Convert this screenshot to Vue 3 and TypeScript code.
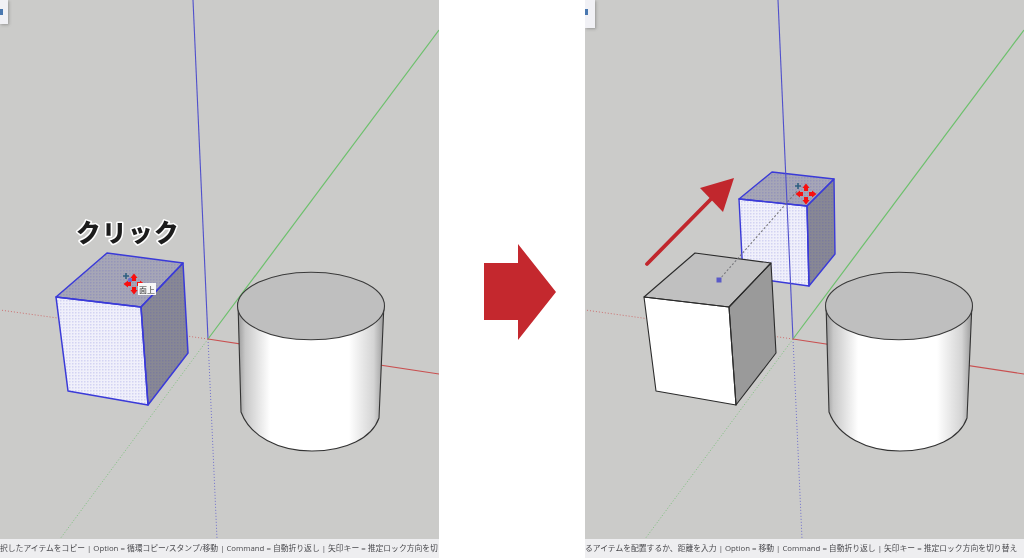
<script setup lang="ts">
type Pt = [number, number]

interface Scene {
  key: string
  dx: number
  text: string
  tabWidth: number
  tabHeight: number
  moved: boolean
}

const scenes: Scene[] = [
  {
    key: 'before',
    dx: 0,
    text: '択したアイテムをコピー | Option = 循環コピー/スタンプ/移動 | Command = 自動折り返し | 矢印キー = 推定ロック方向を切',
    tabWidth: 8,
    tabHeight: 24,
    moved: false,
  },
  {
    key: 'after',
    dx: 3,
    text: 'るアイテムを配置するか、距離を入力 | Option = 移動 | Command = 自動折り返し | 矢印キー = 推定ロック方向を切り替え',
    tabWidth: 10,
    tabHeight: 28,
    moved: true,
  },
]

const pts = (list: Pt[], dx = 0) => list.map(([x, y]) => `${x + dx},${y}`).join(' ')

const cubeTop: Pt[] = [[56, 297], [107, 253], [183, 263], [141, 307]]
const cubeFront: Pt[] = [[56, 297], [141, 307], [148, 405], [68, 391]]
const cubeSide: Pt[] = [[141, 307], [183, 263], [188, 353], [148, 405]]

const smallTop: Pt[] = [[154, 199], [187, 172], [249, 179], [222, 206]]
const smallFront: Pt[] = [[154, 199], [222, 206], [224, 286], [158, 277]]
const smallSide: Pt[] = [[222, 206], [249, 179], [250, 254], [224, 286]]

const cylinderPath = (dx: number) =>
  `M${238 + dx} 303 L${241 + dx} 412 C${250 + dx} 436 ${278 + dx} 451 ${312 + dx} 451 C${346 + dx} 451 ${372 + dx} 438 ${379 + dx} 418 L${384 + dx} 303 Z`
</script>

<template>
  <div class="page">
    <template v-for="(scene, i) in scenes" :key="scene.key">
      <section class="panel">
        <div class="viewport">
          <svg class="canvas" viewBox="0 0 439 539" width="439" height="539">
            <defs>
              <pattern :id="`dots-${scene.key}`" width="3" height="3" patternUnits="userSpaceOnUse">
                <rect width="1.5" height="1.5" fill="#4040c8" fill-opacity="0.16" />
              </pattern>
              <linearGradient :id="`shade-${scene.key}`" x1="0" x2="1" y1="0" y2="0">
                <stop offset="0" stop-color="#9a9a9a" />
                <stop offset="0.05" stop-color="#c8c8c8" />
                <stop offset="0.22" stop-color="#ffffff" />
                <stop offset="0.76" stop-color="#ffffff" />
                <stop offset="0.93" stop-color="#d4d4d4" />
                <stop offset="1" stop-color="#9a9a9a" />
              </linearGradient>
            </defs>

            <g v-if="scene.moved">
              <polygon :points="pts(smallFront)" fill="#f0f0fb" />
              <polygon :points="pts(smallTop)" fill="#a6a6b6" />
              <polygon :points="pts(smallSide)" fill="#888894" />
              <polygon :points="pts(smallFront)" :fill="`url(#dots-${scene.key})`" />
              <polygon :points="pts(smallTop)" :fill="`url(#dots-${scene.key})`" />
              <polygon :points="pts(smallSide)" :fill="`url(#dots-${scene.key})`" />
              <g fill="none" stroke="#3a3ad8" stroke-width="1.4" stroke-linejoin="round">
                <polygon :points="pts(smallTop)" />
                <polygon :points="pts(smallFront)" />
                <polygon :points="pts(smallSide)" />
              </g>
            </g>

            <!-- axes -->
            <line x1="193" y1="0" x2="208" y2="339" stroke="#5050cc" stroke-width="1.1" />
            <line x1="208" y1="339" x2="217" y2="539" stroke="#7070cc" stroke-width="1" stroke-dasharray="1 2" />
            <line x1="208" y1="339" x2="439" y2="30" stroke="#6cc06c" stroke-width="1.2" />
            <line x1="208" y1="339" x2="60" y2="539" stroke="#7cc07c" stroke-width="1" stroke-dasharray="1 2" />
            <line x1="208" y1="339" x2="439" y2="374" stroke="#c95050" stroke-width="1.1" />
            <line x1="208" y1="339" x2="0" y2="310" stroke="#cc7070" stroke-width="1" stroke-dasharray="1 2" />

            <!-- main cube -->
            <template v-if="scene.moved">
              <polygon :points="pts(cubeFront, scene.dx)" fill="#ffffff" />
              <polygon :points="pts(cubeTop, scene.dx)" fill="#c0c0c0" />
              <polygon :points="pts(cubeSide, scene.dx)" fill="#9a9a9a" />
              <g fill="none" stroke="#2b2b2b" stroke-width="1.1" stroke-linejoin="round">
                <polygon :points="pts(cubeTop, scene.dx)" />
                <polygon :points="pts(cubeFront, scene.dx)" />
                <polygon :points="pts(cubeSide, scene.dx)" />
              </g>
              <line x1="134" y1="280" x2="213" y2="190" stroke="#77777c" stroke-width="1.1" stroke-dasharray="2 2" />
              <rect x="131.5" y="277.5" width="5" height="5" fill="#5a5ac8" />
            </template>
            <template v-else>
              <polygon :points="pts(cubeFront)" fill="#f0f0fb" />
              <polygon :points="pts(cubeTop)" fill="#a6a6b6" />
              <polygon :points="pts(cubeSide)" fill="#888894" />
              <polygon :points="pts(cubeFront)" :fill="`url(#dots-${scene.key})`" />
              <polygon :points="pts(cubeTop)" :fill="`url(#dots-${scene.key})`" />
              <polygon :points="pts(cubeSide)" :fill="`url(#dots-${scene.key})`" />
              <g fill="none" stroke="#3a3ad8" stroke-width="1.5" stroke-linejoin="round">
                <polygon :points="pts(cubeTop)" />
                <polygon :points="pts(cubeFront)" />
                <polygon :points="pts(cubeSide)" />
              </g>
            </template>

            <!-- cylinder -->
            <path :d="cylinderPath(scene.dx)" :fill="`url(#shade-${scene.key})`" stroke="#333" stroke-width="1.1" />
            <ellipse :cx="311 + scene.dx" cy="306" rx="73.5" ry="33.8" fill="#bfbfbf" stroke="#3a3a3a" stroke-width="1.1" />

            <!-- move cursor -->
            <g :transform="scene.moved ? 'translate(221 194)' : 'translate(134 284)'">
              <circle v-if="!scene.moved" cx="-4" cy="-4" r="2.2" fill="#6a6ac8" />
              <g fill="#f80f0f">
                <path d="M0 -10.5 L3.6 -6 L2 -6 L2 -3 L-2 -3 L-2 -6 L-3.6 -6 Z" />
                <path d="M0 10.5 L3.6 6 L2 6 L2 3 L-2 3 L-2 6 L-3.6 6 Z" />
                <path d="M-10.5 0 L-6 -3.6 L-6 -2 L-3 -2 L-3 2 L-6 2 L-6 3.6 Z" />
                <path d="M10.5 0 L6 -3.6 L6 -2 L3 -2 L3 2 L6 2 L6 3.6 Z" />
              </g>
              <path d="M-8 -11 V-5 M-11 -8 H-5" stroke="#2f5f80" stroke-width="1.6" fill="none" />
            </g>

            <template v-if="!scene.moved">
              <text class="click-label" x="128" y="242" text-anchor="middle">クリック</text>
              <rect x="138" y="283" width="18" height="12" fill="#f7f7f7" />
              <text class="tip" x="147" y="292.5" text-anchor="middle">面上</text>
            </template>
            <g v-else>
              <line x1="62" y1="264" x2="130" y2="195" stroke="#c1272d" stroke-width="3.8" stroke-linecap="round" />
              <polygon points="149,178 115,188 138,212" fill="#c1272d" />
            </g>
          </svg>
          <div class="tool-tab" :style="{ width: `${scene.tabWidth}px`, height: `${scene.tabHeight}px` }">
            <span class="tool-icon"></span>
          </div>
        </div>
        <div class="status">
          <span class="status-text">{{ scene.text }}</span>
        </div>
      </section>

      <div v-if="i === 0" class="between">
        <svg width="72" height="96" viewBox="0 0 72 96">
          <polygon points="0,19 34,19 34,0 72,48 34,96 34,76 0,76" fill="#c4282e" />
        </svg>
      </div>
    </template>
  </div>
</template>

<style scoped>
.page {
  display: flex;
  width: 1024px;
  height: 558px;
  background: #ffffff;
  overflow: hidden;
}
.panel {
  display: flex;
  flex-direction: column;
  flex: 0 0 439px;
  width: 439px;
  height: 558px;
  overflow: hidden;
}
.viewport {
  position: relative;
  flex: 1;
  background: #cbcbc9;
  overflow: hidden;
}
.canvas {
  display: block;
  filter: blur(0.4px);
}
.tool-tab {
  position: absolute;
  left: 0;
  top: 0;
  background: #f1f1f5;
  box-shadow: 1px 1px 3px rgba(90, 90, 90, 0.45);
}
.tool-icon {
  position: absolute;
  left: 0;
  top: 9px;
  width: 3px;
  height: 6px;
  background: #4a78b0;
}
.status {
  display: flex;
  align-items: center;
  flex: 0 0 19px;
  height: 19px;
  background: #eeeef0;
  overflow: hidden;
}
.status-text {
  flex: none;
  font-family: "Open Sans", "Noto Sans CJK JP", sans-serif;
  font-size: 7.8px;
  line-height: 19px;
  color: #4a4a4e;
  white-space: nowrap;
  filter: blur(0.25px);
}
.between {
  flex: 0 0 146px;
  display: flex;
  align-items: flex-start;
  padding: 244px 0 0 45px;
  box-sizing: border-box;
}
.click-label {
  font-family: "Noto Sans CJK JP", sans-serif;
  font-size: 24.5px;
  font-weight: 900;
  letter-spacing: 1.5px;
  fill: #1c1c1c;
  stroke: #ffffff;
  stroke-width: 3px;
  paint-order: stroke;
  stroke-linejoin: round;
}
.tip {
  font-family: "Noto Sans CJK JP", sans-serif;
  font-size: 8px;
  fill: #333333;
}
</style>
